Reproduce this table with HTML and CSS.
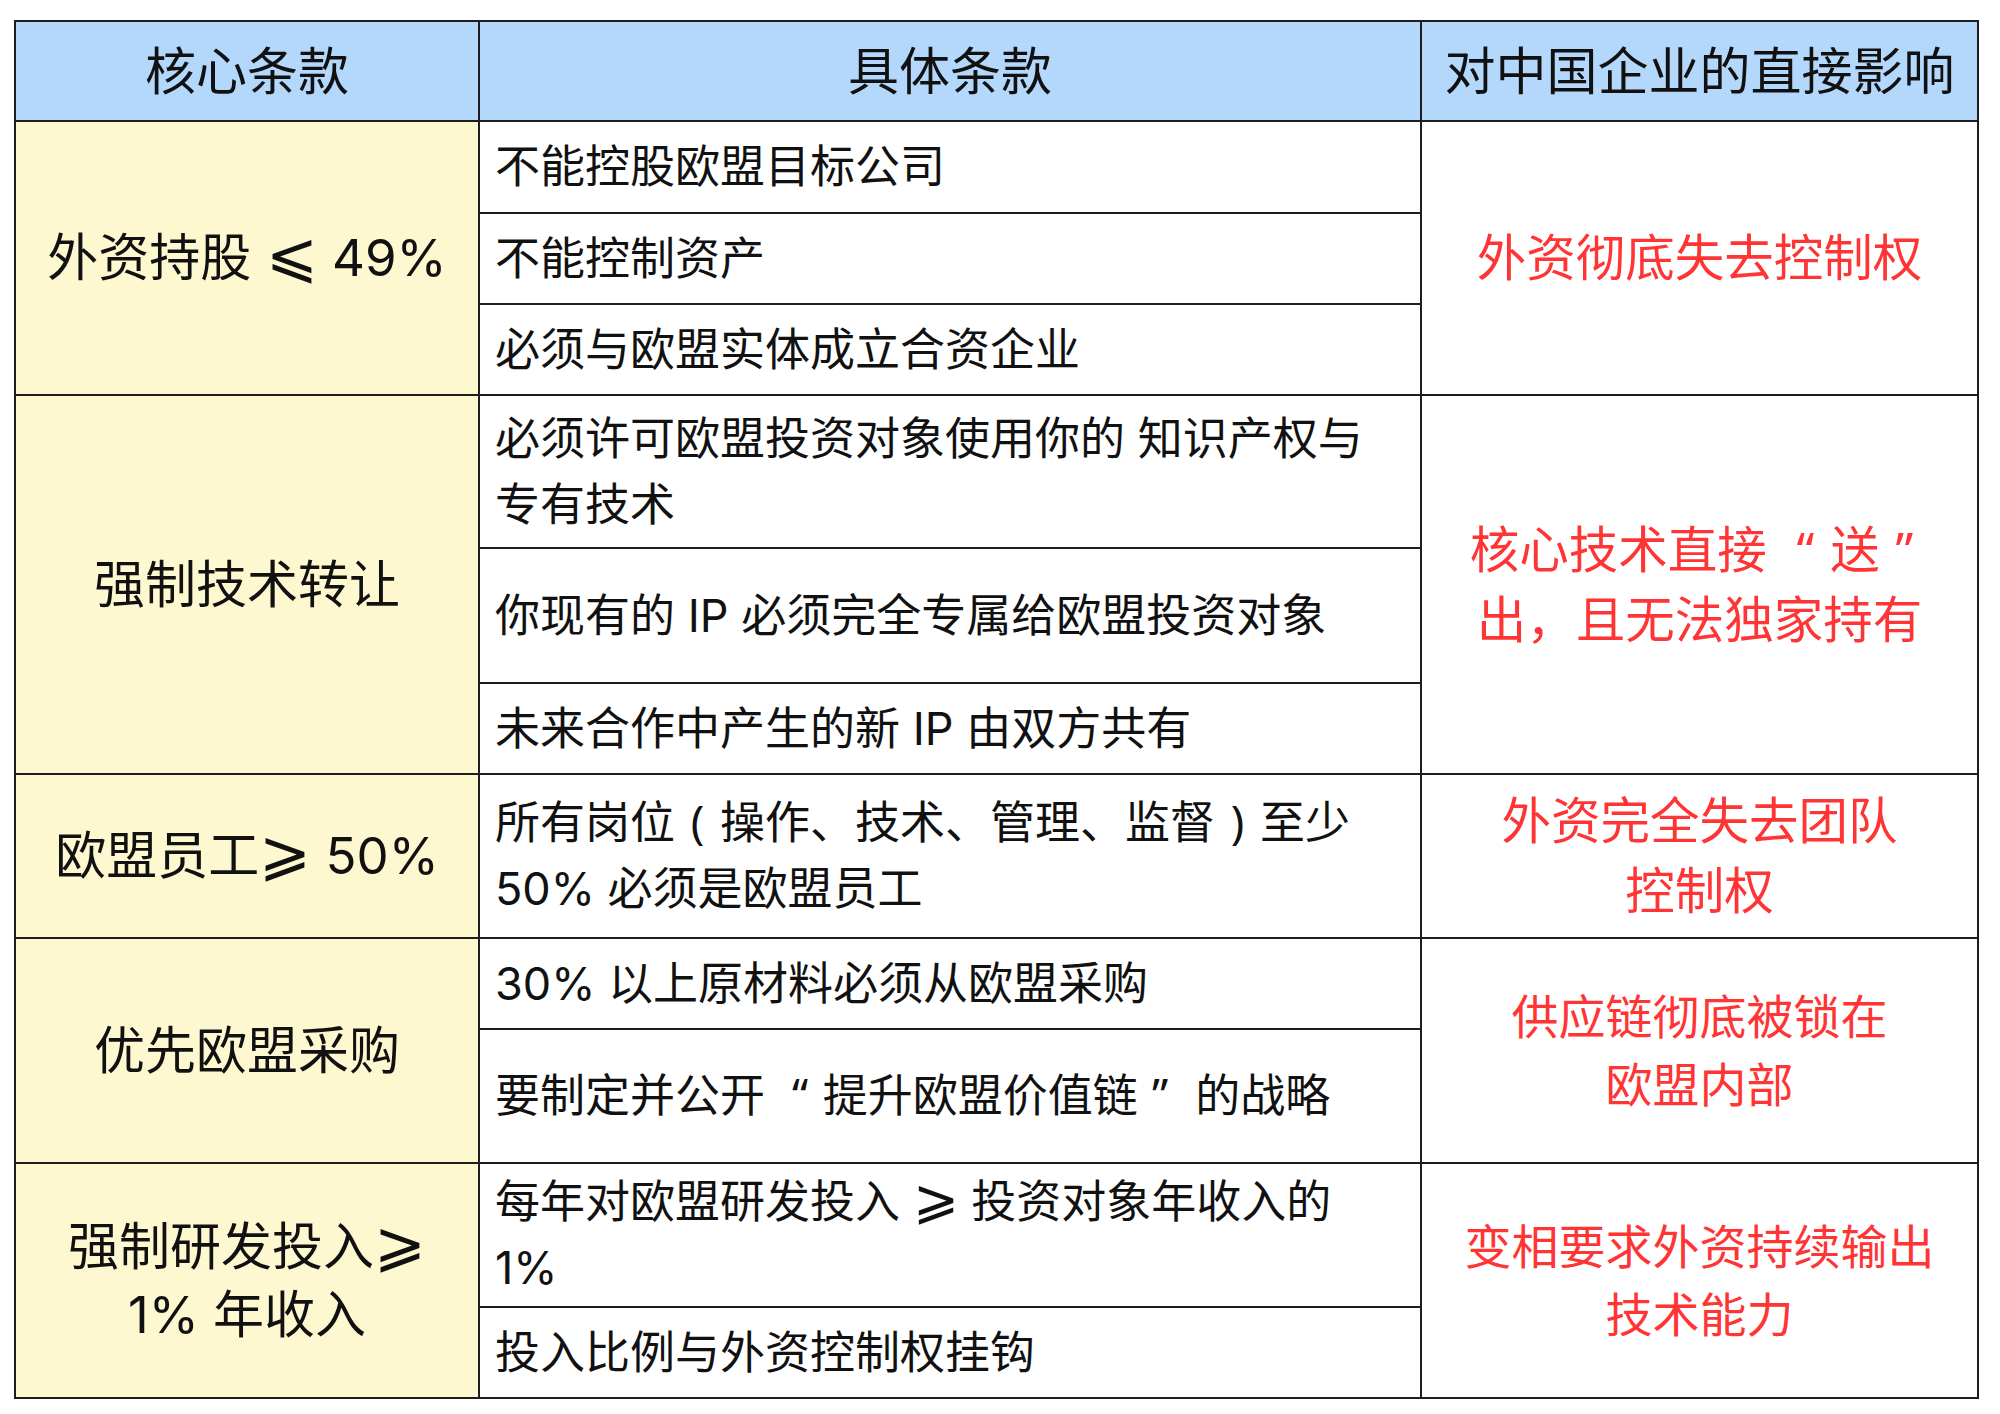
FILE: index.html
```html
<!DOCTYPE html>
<html lang="zh-CN">
<head>
<meta charset="utf-8">
<title>核心条款</title>
<link rel="stylesheet" href="styles.css">
</head>
<body>
<div class="sheet">
  <div class="cell head"><p class="tx">核心条款</p></div>
  <div class="cell head"><p class="tx">具体条款</p></div>
  <div class="cell head"><p class="tx">对中国企业的直接影响</p></div>

  <div class="cell key span3"><p class="tx">外资持股 <span class="rel">⩽</span> 49%</p></div>
  <div class="cell item"><p class="tx">不能控股欧盟目标公司</p></div>
  <div class="cell impact span3"><p class="tx">外资彻底失去控制权</p></div>
  <div class="cell item"><p class="tx">不能控制资产</p></div>
  <div class="cell item"><p class="tx">必须与欧盟实体成立合资企业</p></div>

  <div class="cell key span3"><p class="tx">强制技术转让</p></div>
  <div class="cell item"><p class="tx">必须许可欧盟投资对象使用你的 知识产权与<br>专有技术</p></div>
  <div class="cell impact span3"><p class="tx">核心技术直接 <span class="fw">“</span>送<span class="fw">”</span><br>出，且无法独家持有</p></div>
  <div class="cell item"><p class="tx">你现有的 IP 必须完全专属给欧盟投资对象</p></div>
  <div class="cell item"><p class="tx">未来合作中产生的新 IP 由双方共有</p></div>

  <div class="cell key"><p class="tx">欧盟员工<span class="rel">⩾</span> 50%</p></div>
  <div class="cell item"><p class="tx">所有岗位<span class="fw">(</span>操作、技术、管理、监督<span class="fw">)</span>至少<br>50% 必须是欧盟员工</p></div>
  <div class="cell impact"><p class="tx">外资完全失去团队<br>控制权</p></div>

  <div class="cell key span2"><p class="tx">优先欧盟采购</p></div>
  <div class="cell item"><p class="tx">30% 以上原材料必须从欧盟采购</p></div>
  <div class="cell impact small span2"><p class="tx">供应链彻底被锁在<br>欧盟内部</p></div>
  <div class="cell item"><p class="tx">要制定并公开 <span class="fw">“</span>提升欧盟价值链<span class="fw">”</span> 的战略</p></div>

  <div class="cell key span2"><p class="tx">强制研发投入<span class="rel">⩾</span><br>1% 年收入</p></div>
  <div class="cell item"><p class="tx">每年对欧盟研发投入 <span class="rel">⩾</span> 投资对象年收入的<br>1%</p></div>
  <div class="cell impact small span2"><p class="tx">变相要求外资持续输出<br>技术能力</p></div>
  <div class="cell item"><p class="tx">投入比例与外资控制权挂钩</p></div>
</div>
</body>
</html>
```

FILE: styles.css
```css
html, body {
  margin: 0;
  padding: 0;
  background: #ffffff;
}

body {
  padding: 20px 0 0 14px;
  font-family: "Inter", "Noto Sans CJK SC", "DejaVu Sans", sans-serif;
  color: #111111;
}

.sheet {
  display: grid;
  width: max-content;
  grid-template-columns: 462px 940px 555px;
  grid-template-rows: 98px 90px 89px 89px 151px 133px 89px 162px 89px 132px 142px 89px;
  gap: 2px;
  padding: 2px;
  background: #1e1e1e;
}

.cell {
  display: flex;
  align-items: center;
  background: #ffffff;
}

.tx {
  margin: 0;
}

.head {
  justify-content: center;
  text-align: center;
  padding-top: 2px;
  background: #b4d7fc;
  font-size: 51px;
  line-height: 68px;
}

.key {
  justify-content: center;
  text-align: center;
  background: #fdf8d0;
  font-size: 51px;
  line-height: 68px;
}

.item {
  padding: 0 14px 0 15px;
  font-size: 45px;
  line-height: 66px;
}

.impact {
  justify-content: center;
  text-align: center;
  color: #ff3535;
  font-size: 49.5px;
  line-height: 70px;
}

.impact.small {
  font-size: 47px;
  line-height: 68px;
}

.rel {
  font-family: "DejaVu Sans", sans-serif;
  font-weight: 200;
  font-size: 1.22em;
  line-height: 0;
}

.fw {
  display: inline-block;
  width: 1em;
  text-align: center;
  font-family: "Noto Sans", sans-serif;
  line-height: 0;
}

.span3 {
  grid-row: span 3;
}

.span2 {
  grid-row: span 2;
}
```
